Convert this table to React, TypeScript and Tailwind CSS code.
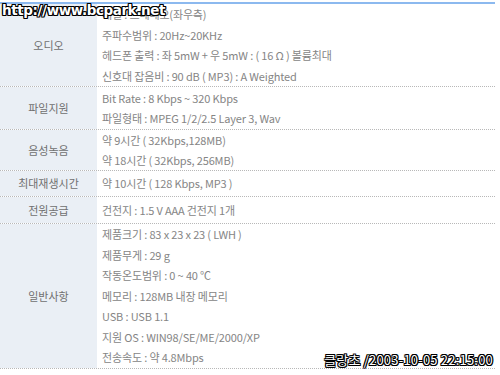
import React from "react";

const rows: { label: string; h: string; lines: string[] }[] = [
  {
    label: "오디오",
    h: "h-[83px]",
    lines: [
      "채널 : 스테레오(좌우측)",
      "주파수범위 : 20Hz~20KHz",
      "헤드폰 출력 : 좌 5mW + 우 5mW : ( 16 Ω ) 볼륨최대",
      "신호대 잡음비 : 90 dB ( MP3) : A Weighted",
    ],
  },
  {
    label: "파일지원",
    h: "h-[43px]",
    lines: ["Bit Rate : 8 Kbps ~ 320 Kbps", "파일형태 : MPEG 1/2/2.5 Layer 3, Wav"],
  },
  {
    label: "음성녹음",
    h: "h-[41px]",
    lines: ["약 9시간 ( 32Kbps,128MB)", "약 18시간 ( 32Kbps, 256MB)"],
  },
  {
    label: "최대재생시간",
    h: "h-[26px]",
    lines: ["약 10시간 ( 128 Kbps, MP3 )"],
  },
  {
    label: "전원공급",
    h: "h-[27px]",
    lines: ["건전지 : 1.5 V AAA 건전지 1개"],
  },
  {
    label: "일반사항",
    h: "h-[145px]",
    lines: [
      "제품크기 : 83 x 23 x 23 ( LWH )",
      "제품무게 : 29 g",
      "작동온도범위 : 0 ~ 40 ℃",
      "메모리 : 128MB 내장 메모리",
      "USB : USB 1.1",
      "지원 OS : WIN98/SE/ME/2000/XP",
      "전송속도 : 약 4.8Mbps",
    ],
  },
];

export default function App() {
  return (
    <div
      className="relative w-[500px] h-[375px] overflow-hidden bg-white"
      style={{ fontFamily: '"Noto Sans CJK KR", "Noto Sans", sans-serif' }}
    >
      <div className="w-[495px] pt-[2px]">
        <div className="h-[2px] bg-[#8cb9ef]" />
        {rows.map((r) => (
          <div
            key={r.label}
            className={`flex ${r.h} border-b border-dotted border-[#b8b8b8]`}
          >
            <div className="w-[97px] shrink-0 bg-[#eaeff5] flex items-center justify-center text-[11px] text-[#707070]">
              {r.label}
            </div>
            <div className="flex-1 pl-[5px] flex flex-col justify-center text-[11px] text-[#858585] tracking-[-0.15px]">
              {r.lines.map((l, i) => (
                <div key={i} className="h-[20.5px] leading-[20.5px] whitespace-nowrap">
                  {l}
                </div>
              ))}
            </div>
          </div>
        ))}
      </div>
      <div
        className="absolute left-[2px] top-[4px] text-[13.5px] font-bold text-white leading-none tracking-[-0.4px] [text-shadow:1px_0_0_#000,-1px_0_0_#000,0_1px_0_#000,0_-1px_0_#000,1px_1px_0_#000,-1px_-1px_0_#000,1px_-1px_0_#000,-1px_1px_0_#000]"
        style={{ fontFamily: '"DejaVu Sans", sans-serif' }}
      >
        http://www.bcpark.net
      </div>
      <div
        className="absolute right-[7px] top-[353px] text-[13px] text-white leading-none tracking-[0.2px] [text-shadow:1px_0_0_#000,-1px_0_0_#000,0_1px_0_#000,0_-1px_0_#000,1px_1px_0_#000,-1px_-1px_0_#000,1px_-1px_0_#000,-1px_1px_0_#000]"
        style={{ fontFamily: '"Noto Sans CJK KR", "Liberation Sans", sans-serif' }}
      >
        클랑초 /2003-10-05 22:15:00
      </div>
    </div>
  );
}
